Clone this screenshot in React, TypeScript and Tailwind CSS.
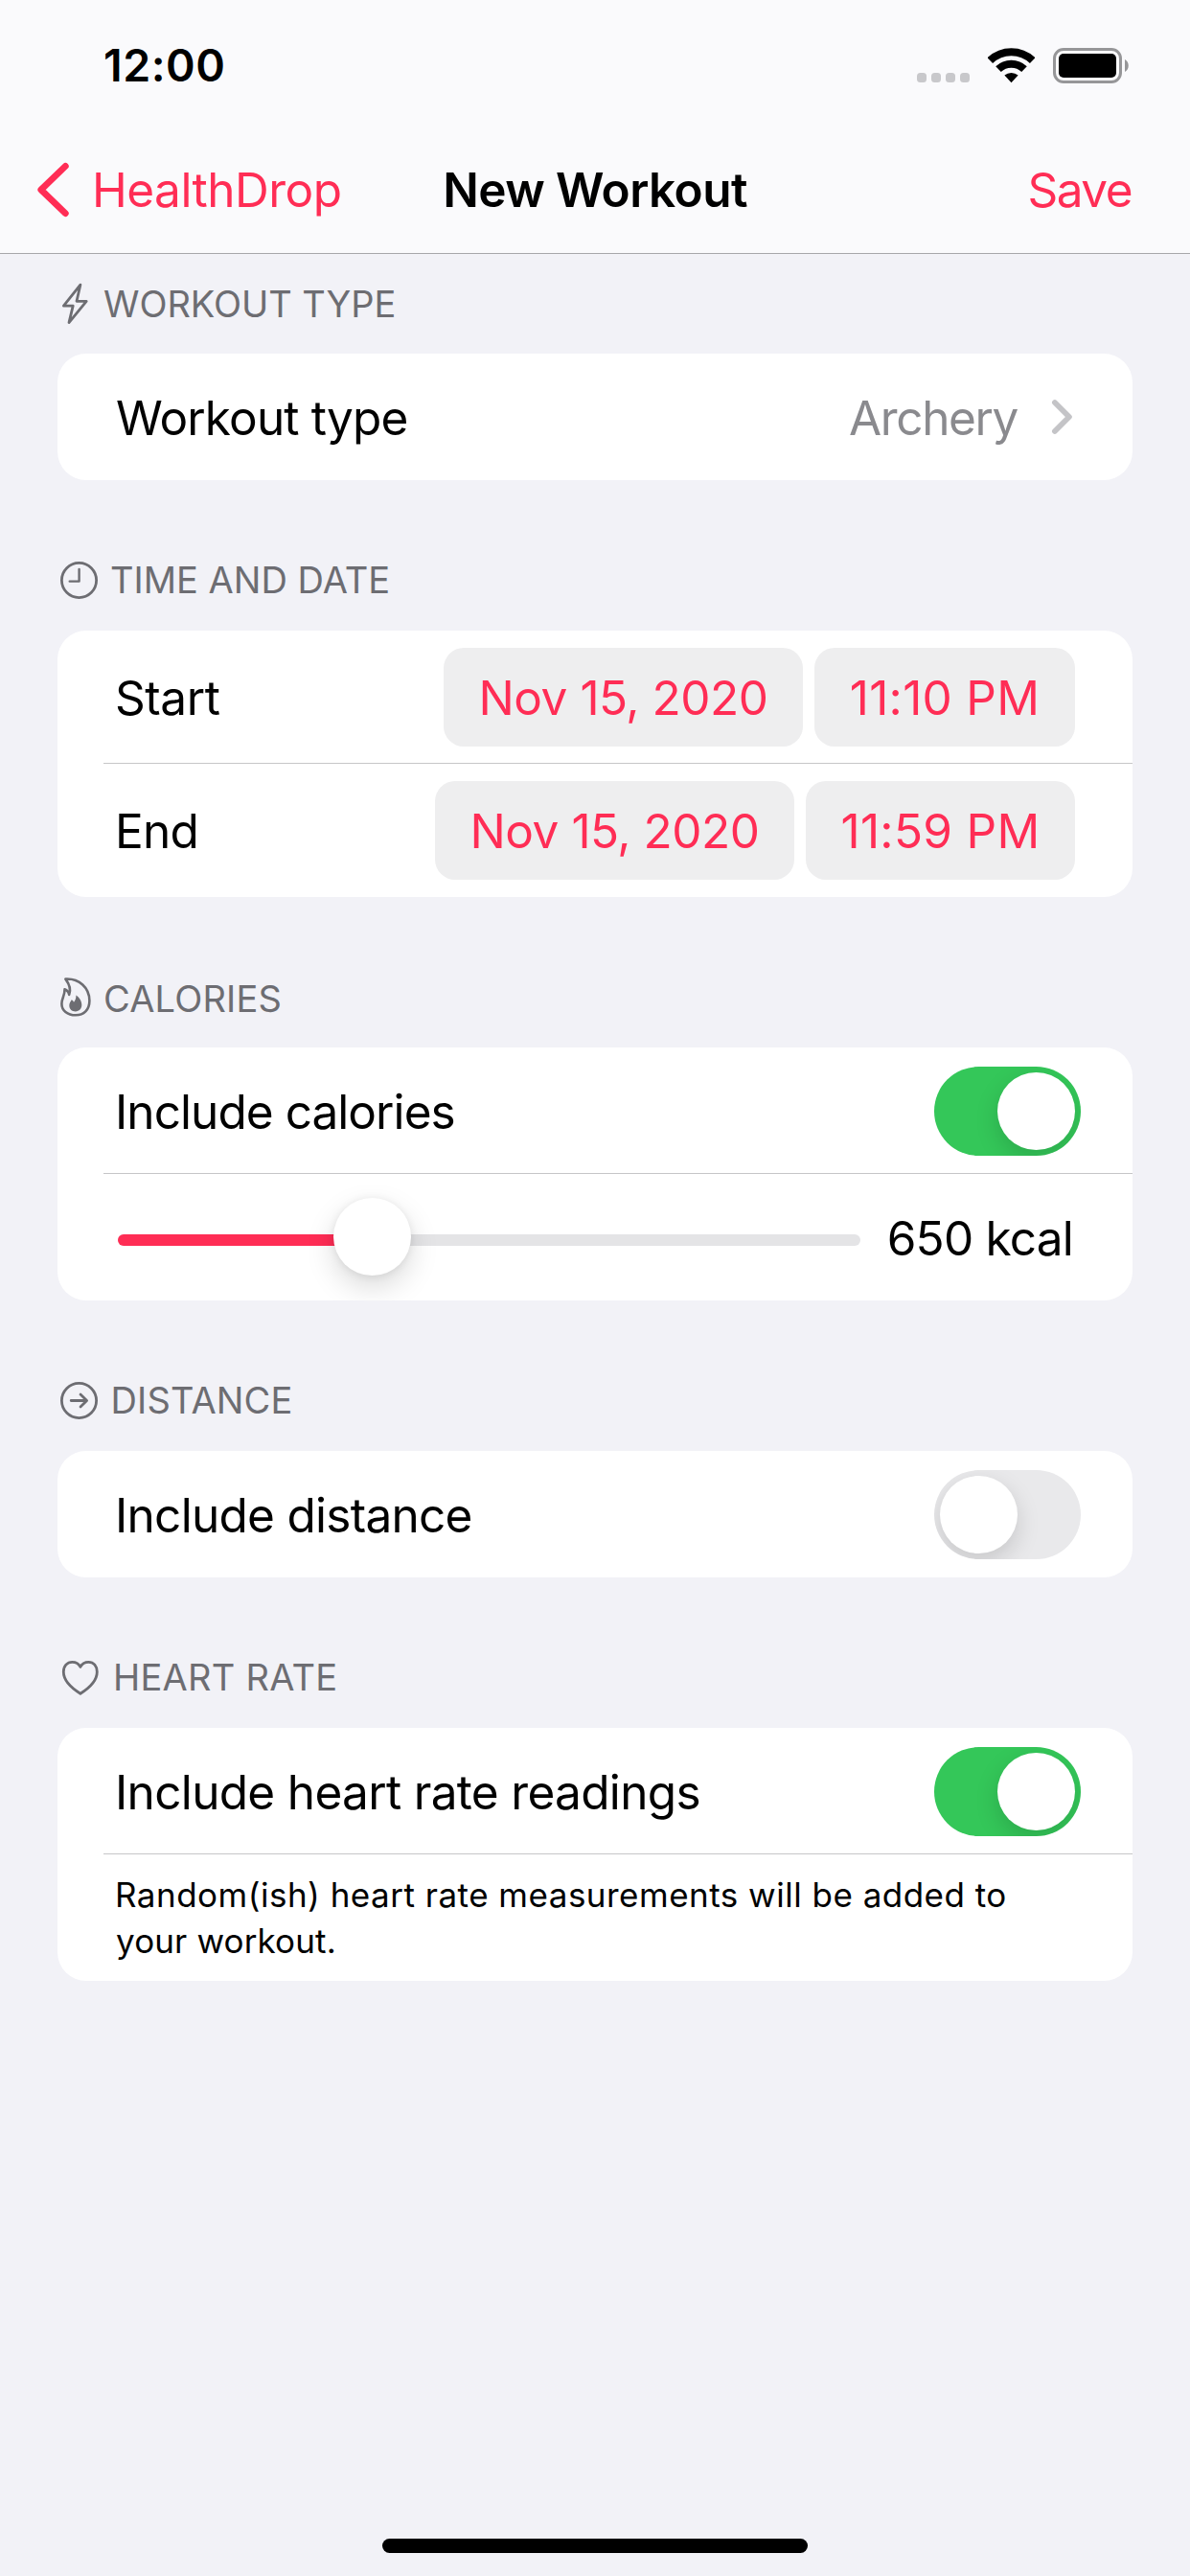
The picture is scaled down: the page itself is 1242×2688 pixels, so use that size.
import type { ReactNode } from "react";

function StatusBar() {
  return (
    <div className="flex h-[136px] items-center justify-between pr-[63px] pl-[108px]">
      <span className="text-[46.5px] leading-none font-semibold tracking-[0.55px]">12:00</span>
      <div className="flex items-center">
        <div className="flex gap-[5px] pt-[25px]">
          {[0, 1, 2, 3].map((i) => (
            <span key={i} className="size-[10px] rounded-[3.5px] bg-[#c8c8cb]" />
          ))}
        </div>
        <svg className="ml-[19px] h-[37px] w-[49px]" viewBox="0 0 49 37" fill="none">
          <path d="M2.3 13.2A32 32 0 0 1 46.7 13.2" stroke="#000" strokeWidth="8" />
          <path d="M11 22.2A19.5 19.5 0 0 1 38 22.2" stroke="#000" strokeWidth="8" />
          <path d="M24.5 36.3L17.4 28.6A10.8 10.8 0 0 1 31.6 28.6Z" fill="#000" />
        </svg>
        <svg className="ml-[19px] h-[37px] w-[80px]" viewBox="0 0 80 37" fill="none">
          <rect x="1.5" y="1.5" width="69" height="34" rx="9.5" stroke="#969698" strokeWidth="3" />
          <rect x="6" y="6" width="60" height="25" rx="5" fill="#000" />
          <path d="M75 12C80 14.5 80 22.5 75 25Z" fill="#969698" />
        </svg>
      </div>
    </div>
  );
}

function NavBar() {
  return (
    <div className="grid h-[128px] grid-cols-[1fr_auto_1fr] items-center px-[38px] pb-1 text-[49.5px] leading-[60px]">
      <button className="flex items-center gap-[22px] text-[#ff2d55]">
        <svg className="h-[58px] w-[36px]" viewBox="0 0 36 58" fill="none">
          <path d="M30.3 4.4L4.8 29L30.3 53.6" stroke="currentColor" strokeWidth="6.8" strokeLinecap="round" strokeLinejoin="round" />
        </svg>
        <span className="tracking-[-0.51px]">HealthDrop</span>
      </button>
      <h1 className="font-semibold tracking-[-0.54px]">New Workout</h1>
      <button className="mr-[23px] justify-self-end tracking-[-1.53px] text-[#ff2d55]">Save</button>
    </div>
  );
}

function SectionHeader({ icon, children, className }: { icon: ReactNode; children: ReactNode; className: string }) {
  return (
    <h2 className={`flex h-[46px] items-center pl-[3px] text-[38px] leading-[46px] text-[#6d6d72] ${className}`}>
      {icon}
      {children}
    </h2>
  );
}

function Card({ children }: { children: ReactNode }) {
  return <div className="overflow-hidden rounded-[30px] bg-white">{children}</div>;
}

function Divider() {
  return <div className="ml-[48px] h-px bg-[#c6c6c8]" />;
}

function Toggle({ on }: { on: boolean }) {
  return on ? (
    <span className="flex h-[93px] w-[153px] justify-end overflow-hidden rounded-full bg-[#34c759] p-[6px]">
      <span className="size-[81px] rounded-full bg-white shadow-[0_9px_24px_rgba(0,0,0,0.15)]" />
    </span>
  ) : (
    <span className="flex h-[93px] w-[153px] overflow-hidden rounded-full bg-[#e9e9eb] p-[6px]">
      <span className="size-[81px] rounded-full bg-white shadow-[0_9px_24px_rgba(0,0,0,0.15)]" />
    </span>
  );
}

function Pill({ children, className }: { children: ReactNode; className: string }) {
  return (
    <span className={`flex h-[103px] items-center justify-center rounded-[21px] bg-[#eeeeef] pt-px text-[#ff2d55] ${className}`}>
      {children}
    </span>
  );
}

export default function App() {
  return (
    <div className="flex h-[2688px] w-[1242px] flex-col bg-[#f2f2f7] font-[Inter,sans-serif] text-black">
      <header className="border-b border-[#a7a7aa] bg-[#fafafc]">
        <StatusBar />
        <NavBar />
      </header>

      <main className="flex-1 px-[60px] text-[49.5px] leading-[60px]">
        <SectionHeader
          className="mt-[29px] mb-[29px] tracking-[-0.06px]"
          icon={
            <svg className="h-[46px] w-[45px]" viewBox="0 0 45 46" fill="none" stroke="currentColor" strokeWidth="2.8" strokeLinejoin="round">
              <path d="M20.9 3.2L3.4 25.2H13.2L9 42.6L27.2 20.3H17Z" />
            </svg>
          }
        >
          WORKOUT TYPE
        </SectionHeader>
        <Card>
          <div className="flex h-[132px] items-center pr-[62px] pl-[61px]">
            <span className="flex-1 pt-[2px] tracking-[-0.84px]">Workout type</span>
            <span className="pt-[2px] tracking-[-1.38px] text-[#8a8a8e]">Archery</span>
            <svg className="ml-[35px] h-[38px] w-[23px]" viewBox="0 0 23 38" fill="none">
              <path d="M3.9 4L18.9 19L3.9 34" stroke="#c4c4c7" strokeWidth="5.8" strokeLinecap="round" strokeLinejoin="round" />
            </svg>
          </div>
        </Card>

        <SectionHeader
          className="mt-[81px] mb-[30px]"
          icon={
            <svg className="h-[46px] w-[52px]" viewBox="0 0 52 46" fill="none" stroke="currentColor" strokeWidth="2.8" strokeLinecap="round" strokeLinejoin="round">
              <circle cx="19.5" cy="23.5" r="18.1" />
              <path d="M19.6 12V24.6H9.7" strokeWidth="2.4" />
            </svg>
          }
        >
          TIME AND DATE
        </SectionHeader>
        <Card>
          <div className="flex h-[138px] items-center gap-3 pr-[60px] pl-[60px]">
            <span className="flex-1 pt-[2px] tracking-[-0.42px]">Start</span>
            <Pill className="w-[375px] tracking-[-0.48px]">Nov 15, 2020</Pill>
            <Pill className="w-[272px] tracking-[0.3px]">11:10 PM</Pill>
          </div>
          <Divider />
          <div className="flex h-[139px] items-center gap-3 pr-[60px] pl-[60px]">
            <span className="flex-1 pt-px tracking-[-0.8px]">End</span>
            <Pill className="w-[375px] tracking-[-0.48px]">Nov 15, 2020</Pill>
            <Pill className="w-[281px] tracking-[0.31px]">11:59 PM</Pill>
          </div>
        </Card>

        <SectionHeader
          className="mt-[83px] mb-[28px] tracking-[0.19px]"
          icon={
            <svg className="h-[46px] w-[45px]" viewBox="0 0 45 46" fill="none" stroke="currentColor" strokeWidth="2.6" strokeLinejoin="round">
              <path d="M5.4 2.6C19.5 1.8 30.4 11.5 30.4 25.2C30.4 34.8 24.4 40.3 16 40.3C7.2 40.3 1.4 35.2 1.4 28.4C1.4 22.5 4.8 20 4.5 13.2C6.9 14 8.6 15.9 9.2 18.9C11.4 13.2 9.6 8.2 5.4 2.6Z" />
              <path
                d="M16.4 19.6C20 22 22.3 25.8 22.3 29.6C22.3 33.8 19.6 36.4 15.8 36.4C11.9 36.4 9.3 33.8 9.3 30.2C9.3 27.6 10.6 26.4 11.7 24.2C13 24.8 13.6 25.6 14 26.8C15.6 24.8 16.6 22.6 16.4 19.6Z"
                fill="currentColor"
                stroke="none"
              />
            </svg>
          }
        >
          CALORIES
        </SectionHeader>
        <Card>
          <div className="flex h-[131px] items-center justify-between pt-px pr-[54px] pl-[60px]">
            <span className="pt-[2px] tracking-[-0.94px]">Include calories</span>
            <Toggle on />
          </div>
          <Divider />
          <div className="flex h-[132px] items-center justify-between pr-[62px] pl-[63px]">
            <div className="relative h-[82px] w-[775px] pt-[38px]">
              <div className="h-[12px] overflow-hidden rounded-full bg-[#e4e4e6]">
                <div className="h-full w-[265px] bg-[#ff2d55]" />
              </div>
              <span className="absolute top-0 left-[225px] size-[81px] rounded-full bg-white shadow-[0_12px_30px_rgba(0,0,0,0.15),0_1px_8px_rgba(0,0,0,0.08)]" />
            </div>
            <span className="pt-[2px] tracking-[-0.78px]">650 kcal</span>
          </div>
        </Card>

        <SectionHeader
          className="mt-[81px] mb-[30px] tracking-[0.15px]"
          icon={
            <svg className="h-[46px] w-[52.5px]" viewBox="0 0 52.5 46" fill="none" stroke="currentColor" strokeWidth="2.8" strokeLinecap="round" strokeLinejoin="round">
              <circle cx="19.5" cy="23.5" r="18.1" />
              <path d="M11.2 23.5H27.4M21 17.1L27.6 23.5L21 29.9" />
            </svg>
          }
        >
          DISTANCE
        </SectionHeader>
        <Card>
          <div className="flex h-[132px] items-center justify-between pr-[54px] pl-[60px]">
            <span className="pt-[2px] tracking-[-0.72px]">Include distance</span>
            <Toggle on={false} />
          </div>
        </Card>

        <SectionHeader
          className="mt-[81px] mb-[30px] tracking-[0.25px]"
          icon={
            <svg className="h-[46px] w-[55px]" viewBox="0 0 55 46" fill="none" stroke="currentColor" strokeWidth="2.8" strokeLinejoin="round">
              <path d="M20.9 12.4C19.2 9 16 7.3 12.4 7.3C7 7.3 3.3 11.6 3.3 17.6C3.3 26 10.5 33.8 20.9 40.3C31.3 33.8 38.3 26 38.3 17.6C38.3 11.6 34.8 7.3 29.4 7.3C25.8 7.3 22.6 9 20.9 12.4Z" />
            </svg>
          }
        >
          HEART RATE
        </SectionHeader>
        <Card>
          <div className="flex h-[131px] items-center justify-between pt-px pr-[54px] pl-[60px]">
            <span className="pt-[2px] tracking-[-0.67px]">Include heart rate readings</span>
            <Toggle on />
          </div>
          <Divider />
          <p className="h-[132px] pt-[18px] pl-[60px] text-[35px] leading-[48px]">
            <span className="tracking-[0.49px]">Random(ish) heart rate measurements will be added to</span>
            <br />
            <span className="pl-[1px] tracking-[0.14px]">your workout.</span>
          </p>
        </Card>
      </main>

      <div className="mx-auto mb-[24px] h-[15px] w-[444px] rounded-full bg-black" />
    </div>
  );
}
